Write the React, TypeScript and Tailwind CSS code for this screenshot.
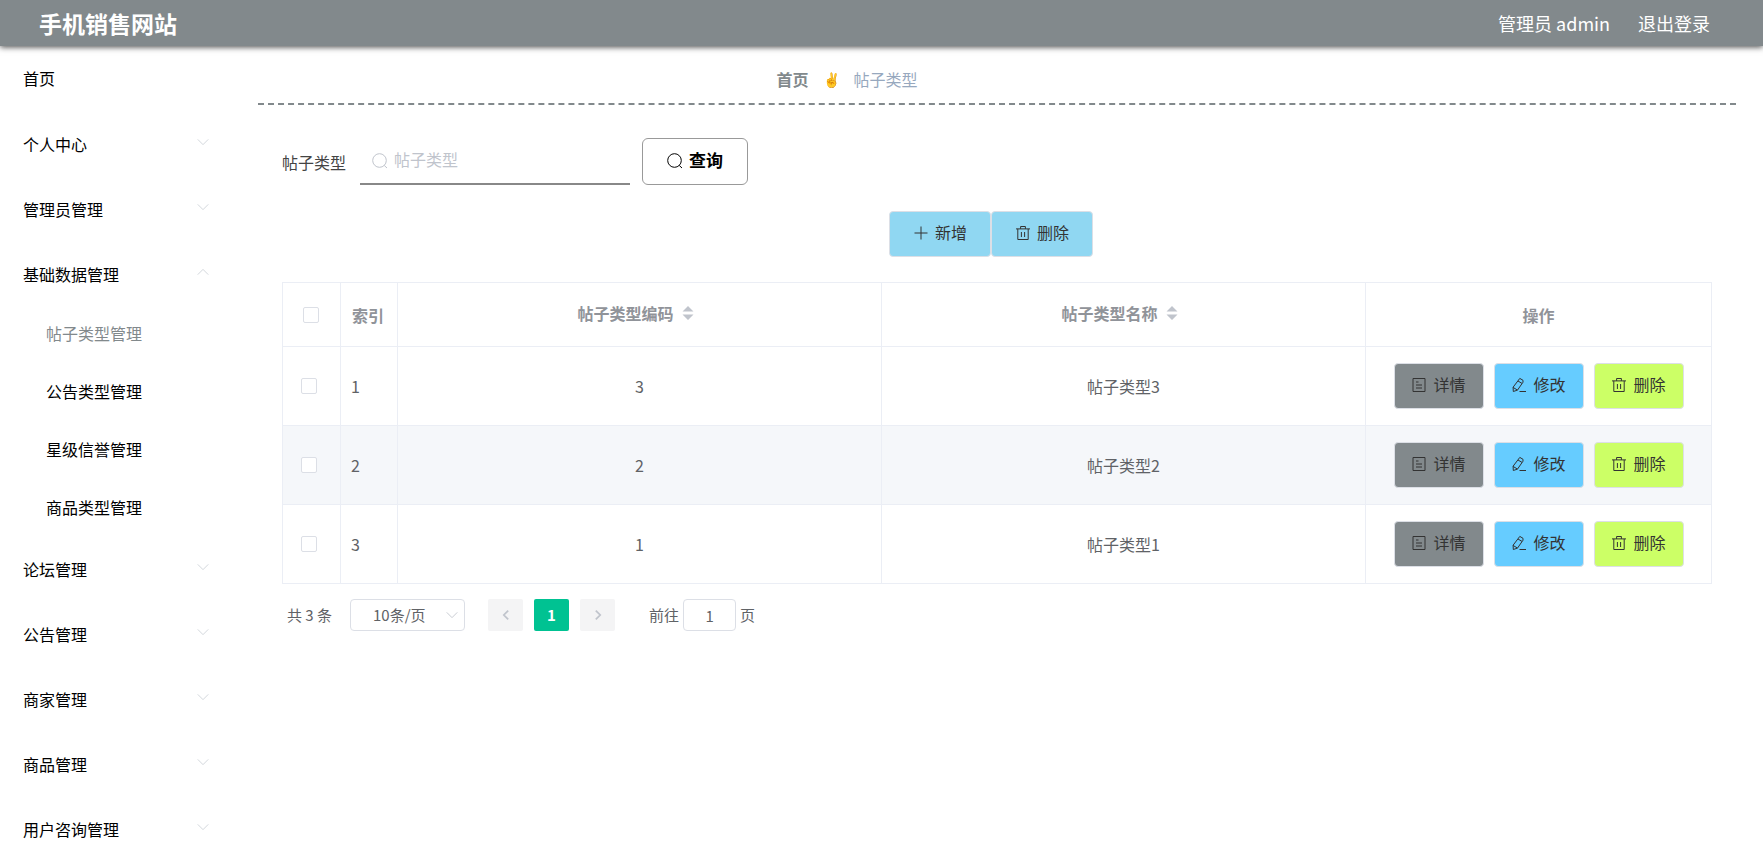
import { useState } from "react";
import type { ReactNode } from "react";

const menus = [
  { name: "个人中心" },
  { name: "管理员管理" },
  {
    name: "基础数据管理",
    children: ["帖子类型管理", "公告类型管理", "星级信誉管理", "商品类型管理"],
  },
  { name: "论坛管理" },
  { name: "公告管理" },
  { name: "商家管理" },
  { name: "商品管理" },
  { name: "用户咨询管理" },
];

const rows = [
  { index: 1, code: "3", name: "帖子类型3" },
  { index: 2, code: "2", name: "帖子类型2" },
  { index: 3, code: "1", name: "帖子类型1" },
];

const icons: Record<string, ReactNode> = {
  search: (
    <>
      <circle cx="7.5" cy="7.5" r="6.8" />
      <path d="M12.2 12.4l2.8 2.6" />
    </>
  ),
  plus: <path d="M8 1.5v13M1.5 8h13" />,
  trash: <path d="M1 3.9h14M2.8 3.9v10.6h10.4V3.9M5.6 3.9V1.5h4.8v2.4M6.4 7v5M9.6 7v5" />,
  detail: <path d="M2 1.5h12v13H2zM5 5h2.5M5 8h6M5 11h6" />,
  edit: <path d="M8.8 1.4l3.2 1.9v1.9l-5.5 7.9-4.2 1.4-.2-4.3zM7 4l4 2.4M2 10.4l4.4 2.6M8.5 14.5H15" />,
  down: <path d="M2 5l6 6 6-6" />,
  up: <path d="M2 11l6-6 6 6" />,
  left: <path d="M10.5 3l-5 5 5 5" />,
  right: <path d="M5.5 3l5 5-5 5" />,
};

function Icon({ name, className = "size-4" }: { name: string; className?: string }) {
  return (
    <svg viewBox="0 0 16 16" fill="none" stroke="currentColor" className={`shrink-0 ${className}`} aria-hidden="true">
      {icons[name]}
    </svg>
  );
}

function SortCaret() {
  return (
    <svg viewBox="0 0 12 14" className="h-[14px] w-3 fill-[#c0c4cc]" aria-hidden="true">
      <path d="M6 0l5.5 5.5H.5zM6 14l5.5-5.5H.5z" />
    </svg>
  );
}

function Checkbox({ label }: { label: string }) {
  return (
    <input
      type="checkbox"
      aria-label={label}
      className="block size-4 appearance-none rounded-xs border border-[#dcdfe6] bg-white checked:bg-[#00c292]"
    />
  );
}

function ActionButton({ icon, text, className }: { icon: string; text: string; className: string }) {
  return (
    <button
      type="button"
      className={`flex h-[46px] items-center justify-center gap-1.5 rounded border border-[#dcdfe6] pb-1 text-[#333] ${className}`}
    >
      <Icon name={icon} className="mt-0.5 size-4" />
      {text}
    </button>
  );
}

export default function App() {
  const [keyword, setKeyword] = useState("");
  const [page, setPage] = useState("1");
  const [opened, setOpened] = useState("基础数据管理");

  return (
    <div className="h-screen overflow-hidden bg-white font-['Noto_Sans_CJK_SC',sans-serif] text-base text-[#606266]">
      {/* 顶部导航 */}
      <header className="relative flex h-[46px] items-center justify-between bg-[#82898c] pr-[53px] pl-[39px] text-white shadow-[0_1px_6px_#444]">
        <h1 className="text-[23px] font-bold">手机销售网站</h1>
        <div className="flex items-center gap-7 text-lg">
          <span>管理员 admin</span>
          <button type="button">退出登录</button>
        </div>
      </header>

      <div className="flex">
        {/* 侧边菜单 */}
        <nav className="w-[258px] shrink-0 text-black">
          <a href="#" className="flex h-[67px] items-center pb-1 pl-[23px]">
            首页
          </a>
          <ul>
            {menus.map((menu) => (
              <li key={menu.name}>
                <button
                  type="button"
                  onClick={() => setOpened(opened === menu.name ? "" : menu.name)}
                  className="flex h-[65px] w-full items-center justify-between pr-12 pb-1 pl-[23px]"
                >
                  {menu.name}
                  <Icon name={opened === menu.name ? "up" : "down"} className="mb-1 size-[14px] text-[#ccd0d6]" />
                </button>
                {menu.children && opened === menu.name && (
                  <ul className="-mt-0.5">
                    {menu.children.map((child, i) => (
                      <li key={child}>
                        <a
                          href="#"
                          className={`flex h-[58px] items-center pb-1 pl-[46px] ${i === 0 ? "text-[#82898c]" : ""}`}
                        >
                          {child}
                        </a>
                      </li>
                    ))}
                  </ul>
                )}
              </li>
            ))}
          </ul>
        </nav>

        <main className="mr-[27px] min-w-0 flex-1">
          {/* 面包屑 */}
          <div className="flex h-[59px] items-center justify-center gap-[14px] border-b-2 border-dashed border-[#82898c] pt-2 pr-[300px]">
            <a href="#" className="font-bold text-[#82898c]">
              首页
            </a>
            <span className="text-sm">✌</span>
            <span className="text-[#97a8be]">帖子类型</span>
          </div>

          <div className="px-6 pt-[33px]">
            {/* 查询 */}
            <form className="flex items-center" onSubmit={(e) => e.preventDefault()}>
              <label htmlFor="keyword" className="mr-[14px] text-[#444]">
                帖子类型
              </label>
              <div className="mr-3 flex h-[47px] w-[270px] items-center gap-1.5 border-b-2 border-[#888] pl-3 text-[#c0c4cc]">
                <Icon name="search" />
                <input
                  id="keyword"
                  value={keyword}
                  onChange={(e) => setKeyword(e.target.value)}
                  placeholder="帖子类型"
                  className="w-full min-w-0 pb-1 text-[#333] outline-none placeholder:text-[#c0c4cc]"
                />
              </div>
              <button
                type="submit"
                className="flex h-[47px] w-[106px] items-center justify-center gap-1.5 rounded-md border border-[#999] pb-1 text-[17px] font-bold text-black"
              >
                <Icon name="search" className="mt-0.5 size-4" />
                查询
              </button>
            </form>

            <div className="mt-[26px] mb-[25px] flex justify-center pr-3">
              <ActionButton icon="plus" text="新增" className="w-[102px] bg-[#90d7f2]" />
              <ActionButton icon="trash" text="删除" className="w-[102px] bg-[#90d7f2]" />
            </div>

            {/* 列表 */}
            <table className="w-full table-fixed border-collapse border border-[#ebeef5]">
              <thead>
                <tr className="h-16 text-[#909399] [&>th]:border [&>th]:border-[#ebeef5]">
                  <th className="w-[58px] pl-5">
                    <Checkbox label="全选" />
                  </th>
                  <th className="w-[57px] pr-0.5 font-bold">索引</th>
                  {["帖子类型编码", "帖子类型名称"].map((title) => (
                    <th key={title} className="pr-2 pb-1 font-bold">
                      <button type="button" className="inline-flex items-center gap-2">
                        {title}
                        <SortCaret />
                      </button>
                    </th>
                  ))}
                  <th className="w-[346px] font-bold">操作</th>
                </tr>
              </thead>
              <tbody>
                {rows.map((row) => (
                  <tr
                    key={row.index}
                    className="h-[79px] text-center even:bg-[#f5f7fa] [&>td]:border [&>td]:border-[#ebeef5]"
                  >
                    <td className="pl-[18px]">
                      <Checkbox label={`选择第${row.index}行`} />
                    </td>
                    <td className="pl-[10px] text-left">{row.index}</td>
                    <td>{row.code}</td>
                    <td>{row.name}</td>
                    <td>
                      <div className="flex justify-center gap-[10px]">
                        <ActionButton icon="detail" text="详情" className="w-[90px] bg-[#82898c]" />
                        <ActionButton icon="edit" text="修改" className="w-[90px] bg-[#66ccff]" />
                        <ActionButton icon="trash" text="删除" className="w-[90px] bg-[#ccff66]" />
                      </div>
                    </td>
                  </tr>
                ))}
              </tbody>
            </table>

            {/* 分页 */}
            <div className="mt-[15px] flex h-8 items-center pl-[5px] text-[15px]">
              <span>共 3 条</span>
              <div className="relative ml-[18px]">
                <select
                  aria-label="每页条数"
                  className="h-8 w-[115px] appearance-none rounded border border-[#dcdfe6] bg-white pl-[22px] outline-none"
                >
                  <option>10条/页</option>
                  <option>20条/页</option>
                  <option>50条/页</option>
                </select>
                <Icon
                  name="down"
                  className="pointer-events-none absolute top-[9px] right-[6px] size-[14px] text-[#c0c4cc]"
                />
              </div>
              <div className="ml-[23px] flex gap-[11px]">
                <button
                  type="button"
                  aria-label="上一页"
                  className="flex h-8 w-[35px] items-center justify-center rounded-xs bg-[#f4f4f5] text-[#c0c4cc]"
                >
                  <Icon name="left" className="size-[14px] stroke-2" />
                </button>
                <button type="button" className="h-8 w-[35px] rounded-xs bg-[#00c292] font-bold text-white">
                  1
                </button>
                <button
                  type="button"
                  aria-label="下一页"
                  className="flex h-8 w-[35px] items-center justify-center rounded-xs bg-[#f4f4f5] text-[#c0c4cc]"
                >
                  <Icon name="right" className="size-[14px] stroke-2" />
                </button>
              </div>
              <label className="ml-[34px] flex items-center gap-1">
                前往
                <input
                  value={page}
                  onChange={(e) => setPage(e.target.value)}
                  className="h-8 w-[53px] rounded border border-[#dcdfe6] text-center outline-none"
                />
                页
              </label>
            </div>
          </div>
        </main>
      </div>
    </div>
  );
}
